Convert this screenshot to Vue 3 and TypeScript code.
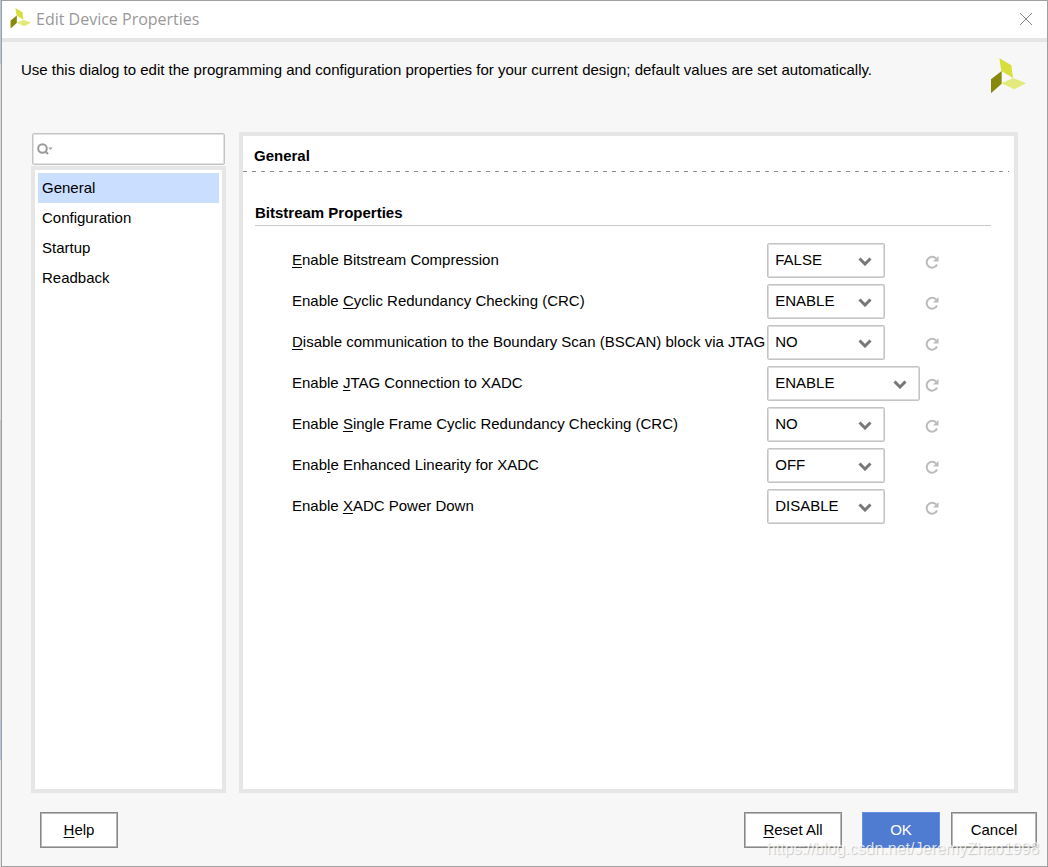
<script setup lang="ts">
import { ref } from 'vue'

interface Property {
  id: string
  before: string
  key: string
  after: string
  value: string
  options: string[]
  wide?: boolean
}

const categories = ['General', 'Configuration', 'Startup', 'Readback']
const selected = ref('General')
const query = ref('')

const properties = ref<Property[]>([
  { id: 'compress', before: '', key: 'E', after: 'nable Bitstream Compression', value: 'FALSE', options: ['FALSE', 'TRUE'] },
  { id: 'crc', before: 'Enable ', key: 'C', after: 'yclic Redundancy Checking (CRC)', value: 'ENABLE', options: ['ENABLE', 'DISABLE'] },
  { id: 'bscan', before: '', key: 'D', after: 'isable communication to the Boundary Scan (BSCAN) block via JTAG', value: 'NO', options: ['NO', 'YES'] },
  { id: 'jtag', before: 'Enable ', key: 'J', after: 'TAG Connection to XADC', value: 'ENABLE', options: ['ENABLE', 'DISABLE'], wide: true },
  { id: 'frame', before: 'Enable ', key: 'S', after: 'ingle Frame Cyclic Redundancy Checking (CRC)', value: 'NO', options: ['NO', 'YES'] },
  { id: 'linear', before: 'Enab', key: 'l', after: 'e Enhanced Linearity for XADC', value: 'OFF', options: ['OFF', 'ON'] },
  { id: 'power', before: 'Enable ', key: 'X', after: 'ADC Power Down', value: 'DISABLE', options: ['DISABLE', 'ENABLE'] },
])

const defaults = properties.value.map((p) => p.value)

function reset(index: number) {
  properties.value[index].value = defaults[index]
}

function resetAll() {
  properties.value.forEach((_, i) => reset(i))
}
</script>

<template>
  <div class="desktop">
    <main class="dialog">
      <header class="titlebar">
        <svg class="app-icon" viewBox="93 174 108 108" aria-hidden="true">
          <polygon points="121,174 157,196 162,234 127,213" fill="#d6df3c" />
          <polygon points="96,238 128,213 128,251 96,280" fill="#86890b" />
          <polygon points="127,250 163,234 201,250 166,268" fill="#e3ea7c" />
        </svg>
        <h1>Edit Device Properties</h1>
        <button class="close" type="button" aria-label="Close">
          <svg viewBox="0 0 12 12" aria-hidden="true"><path d="M0 0L12 12M12 0L0 12" /></svg>
        </button>
      </header>

      <section class="intro">
        <p>Use this dialog to edit the programming and configuration properties for your current design; default values are set automatically.</p>
        <svg class="logo" viewBox="93 174 108 108" aria-hidden="true">
          <polygon points="121,174 157,196 162,234 127,213" fill="#d6df3c" />
          <polygon points="96,238 128,213 128,251 96,280" fill="#86890b" />
          <polygon points="127,250 163,234 201,250 166,268" fill="#e3ea7c" />
        </svg>
      </section>

      <div class="content">
        <nav class="sidebar">
          <div class="search">
            <svg viewBox="0 0 16 14" aria-hidden="true">
              <circle cx="5.500" cy="6.500" r="4.300" /><path d="M8.500 9.500L11 12" /><path class="caret" d="M11.500 5.500h4l-2 2.500z" />
            </svg>
            <input v-model="query" type="text" aria-label="Search categories" />
          </div>
          <ul class="categories">
            <li v-for="c in categories" :key="c">
              <button type="button" :class="{ active: c === selected }" @click="selected = c">{{ c }}</button>
            </li>
          </ul>
        </nav>

        <section class="panel">
          <h2>General</h2>
          <div class="group">
            <h3>Bitstream Properties</h3>
            <div class="grid">
              <div v-for="(p, i) in properties" :key="p.id" class="row">
                <label :for="p.id">{{ p.before }}<u>{{ p.key }}</u>{{ p.after }}</label>
                <div class="choice" :class="{ wide: p.wide }">
                  <select :id="p.id" v-model="p.value">
                    <option v-for="o in p.options" :key="o">{{ o }}</option>
                  </select>
                  <svg viewBox="0 0 14 10" aria-hidden="true"><path d="M1.500 2.500L7 8L12.500 2.500" /></svg>
                </div>
                <button class="reset" type="button" aria-label="Reset to default" @click="reset(i)">
                  <svg viewBox="0 0 14 14" aria-hidden="true">
                    <path class="arc" d="M11 3.500A5.400 5.400 0 1 0 12 9.500" /><path class="head" d="M13.500 1v5.500H8z" />
                  </svg>
                </button>
              </div>
            </div>
          </div>
        </section>
      </div>

      <footer class="actions">
        <button class="btn help" type="button"><span><u>H</u>elp</span></button>
        <button class="btn reset-all" type="button" @click="resetAll"><span><u>R</u>eset All</span></button>
        <button class="btn ok" type="button">OK</button>
        <button class="btn cancel" type="button">Cancel</button>
      </footer>
      <span class="watermark">https://blog.csdn.net/JeremyZhao1998</span>
    </main>
  </div>
</template>

<style>
body {
  margin: 0;
}
</style>

<style scoped>
* {
  box-sizing: border-box;
}

.desktop {
  min-height: 100vh;
  display: flex;
  padding-left: 1px;
  background: linear-gradient(#b5c7e0 0 64px, #dcdcdc 64px 420px, #c8c8c8 420px 720px, #b3c5e3 720px 760px, #e4e4e4 760px);
  font-family: "Liberation Sans", Arial, sans-serif;
  font-size: 15px;
  line-height: 18px;
  color: #000;
}

.dialog {
  position: relative;
  flex: 1;
  display: flex;
  flex-direction: column;
  border: 1px solid #a0a0a0;
  background: #f7f7f7;
}

h1,
h2,
h3,
p,
ul {
  margin: 0;
  padding: 0;
}

button,
input,
select {
  font: inherit;
  color: inherit;
  margin: 0;
}

u {
  text-decoration-thickness: 1px;
  text-underline-offset: 2px;
  text-decoration-skip-ink: none;
}

.titlebar {
  display: flex;
  align-items: center;
  height: 41px;
  padding: 0 15px 2px 8px;
  border-bottom: 4px solid #e6e6e6;
  background: #fff;
}

.app-icon {
  width: 21px;
  height: 21px;
}

h1 {
  margin-left: 5px;
  flex: 1;
  font-family: "Open Sans", "Noto Sans", sans-serif;
  font-size: 16px;
  font-weight: 400;
  color: #999;
}

.close {
  display: flex;
  padding: 0;
  border: 0;
  background: none;
}

.close svg {
  width: 12px;
  height: 12px;
  stroke: #888;
  fill: none;
  overflow: visible;
}

.intro {
  display: flex;
  justify-content: space-between;
  align-items: flex-start;
  height: 90px;
  padding: 16px 21px 0 19px;
}

.intro p {
  margin-top: 3px;
}

.logo {
  flex: none;
  width: 36px;
  height: 36px;
}

.content {
  flex: 1;
  display: flex;
  gap: 13px;
  padding: 0 29px;
}

.sidebar {
  display: flex;
  flex-direction: column;
  width: 195px;
}

.search {
  display: flex;
  align-items: center;
  height: 32px;
  margin: 1px;
  padding: 0 4px;
  border: 1px solid #c4c4c4;
  border-radius: 2px;
  box-shadow: inset 0 0 0 1px #e2e2e2;
  background: #fff;
}

.search svg {
  flex: none;
  width: 16px;
  height: 14px;
  fill: none;
  stroke: #999;
  stroke-width: 2;
}

.search .caret {
  fill: #999;
  stroke: none;
}

.search input {
  flex: 1;
  min-width: 0;
  border: 0;
  padding: 0 4px;
  background: none;
  outline: none;
}

.categories {
  flex: 1;
  padding: 3px;
  border: 4px solid #e6e6e6;
  background: #fff;
  list-style: none;
}

.categories button {
  display: block;
  width: 100%;
  height: 30px;
  padding: 0 4px;
  border: 0;
  background: none;
  text-align: left;
}

.categories .active {
  background: #cadeff;
}

.panel {
  flex: 1;
  border: 4px solid #e6e6e6;
  background: #fff;
}

h2 {
  height: 36px;
  margin-right: 5px;
  padding: 11px 0 0 11px;
  font-size: 15px;
  background: repeating-linear-gradient(90deg, #909090 0 4px, transparent 4px 9px) left bottom / 100% 1px no-repeat;
}

.group {
  padding: 32px 23px 0 12px;
}

h3 {
  padding-bottom: 3px;
  border-bottom: 1px solid #cbcbcb;
  font-size: 15px;
}

.grid {
  display: grid;
  grid-template-columns: max-content 160px 14px;
  column-gap: 2px;
  row-gap: 6px;
  padding: 17px 0 0 37px;
}

.row {
  display: contents;
}

.row label {
  align-self: center;
  padding-bottom: 2px;
}

.choice {
  display: grid;
  align-items: center;
  width: 118px;
}

.choice.wide {
  width: 153px;
}

.choice select,
.choice svg {
  grid-area: 1 / 1;
}

.choice select {
  appearance: none;
  width: 100%;
  height: 35px;
  padding: 0 7px 2px;
  border: 1px solid #c4c4c4;
  border-radius: 2px;
  box-shadow: inset 0 0 0 1px #dcdcdc;
  background: #fff;
}

.choice svg {
  justify-self: end;
  width: 14px;
  height: 10px;
  margin-right: 13px;
  fill: none;
  stroke: #777;
  stroke-width: 3;
  pointer-events: none;
}

.reset {
  display: flex;
  align-items: center;
  padding: 2px 0 0;
  margin-left: -4px;
  border: 0;
  background: none;
}

.reset svg {
  width: 14px;
  height: 14px;
}

.reset .arc {
  fill: none;
  stroke: #bbb;
  stroke-width: 2;
}

.reset .head {
  fill: #bbb;
}

.actions {
  display: flex;
  padding: 19px 10px 18px 38px;
}

.btn {
  height: 36px;
  padding: 0;
  border: 1px solid #888;
  box-shadow: inset 0 0 0 1px #b8b8b8;
  background: #fff;
}

.help {
  width: 78px;
  margin-right: auto;
}

.reset-all {
  width: 98px;
  margin-right: 20px;
}

.ok {
  width: 78px;
  margin-right: 11px;
  border-color: #6590e0;
  box-shadow: none;
  background: #4f7bd0;
  color: #fff;
}

.cancel {
  width: 86px;
}

.watermark {
  position: absolute;
  right: 8px;
  bottom: 8px;
  font-size: 16px;
  color: rgba(255, 255, 255, 0.8);
  text-shadow: 1px 1px 1px rgba(0, 0, 0, 0.2);
  pointer-events: none;
}
</style>
